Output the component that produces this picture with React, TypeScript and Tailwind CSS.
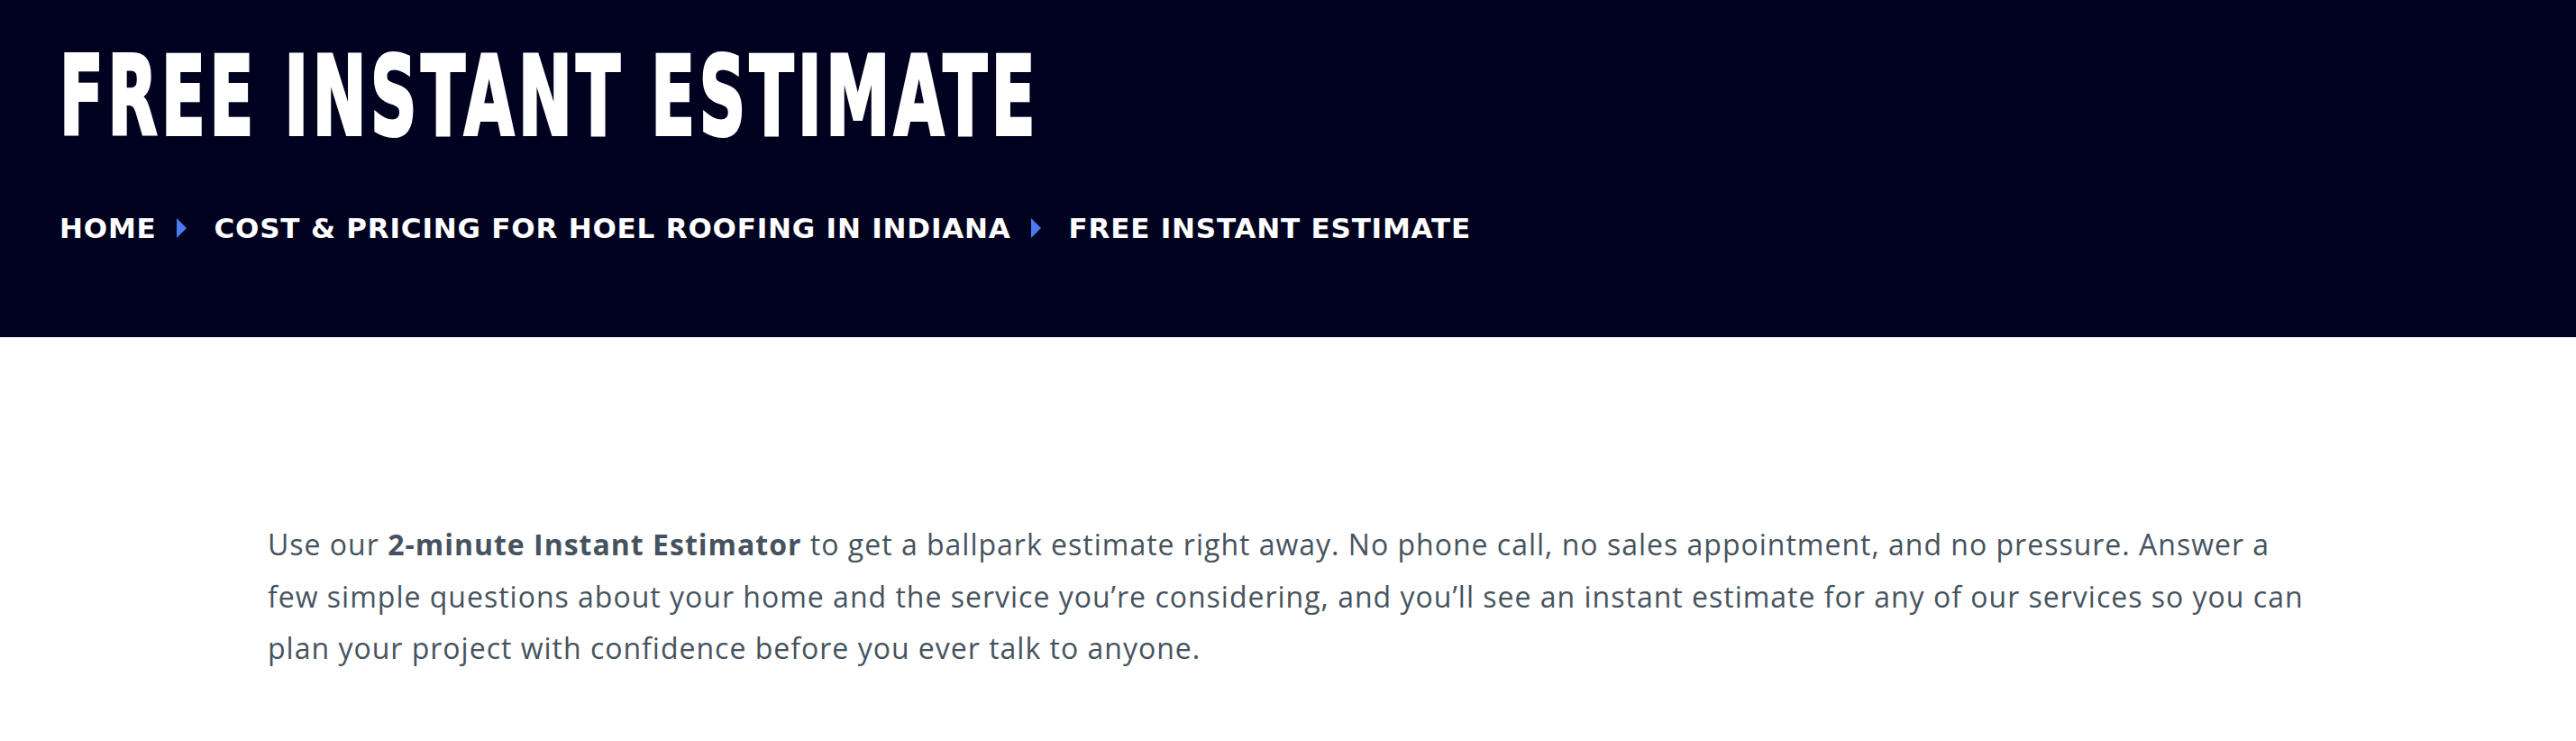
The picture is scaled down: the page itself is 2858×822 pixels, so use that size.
import React from 'react';

const Arrow: React.FC = () => (
  <svg width="11" height="22" viewBox="0 0 11 22" className="shrink-0">
    <path d="M0 0 L11 11 L0 22 Z" fill="#4a7bf0" />
  </svg>
);

const App: React.FC = () => {
  const crumbs = ['Home', 'Cost & Pricing for Hoel Roofing in Indiana', 'Free Instant Estimate'];

  return (
    <div className="min-h-screen bg-white">
      <header className="bg-[#01021f] h-[374px] px-[66px] pt-[41px]">
        <h1 className="inline-block origin-left scale-x-[0.585] whitespace-nowrap text-white uppercase font-bold text-[122px] leading-[132px] tracking-[8px] [-webkit-text-stroke:4px_white] [font-family:'DejaVu_Sans',sans-serif]">
          Free Instant Estimate
        </h1>
        <nav className="mt-[57px] flex items-center text-white uppercase font-bold text-[31px] tracking-[0.8px] [font-family:'DejaVu_Sans',sans-serif]">
          {crumbs.map((c, i) => (
            <React.Fragment key={c}>
              {i > 0 && (
                <span className="ml-[22px] mr-[31px] flex items-center">
                  <Arrow />
                </span>
              )}
              <span>{c}</span>
            </React.Fragment>
          ))}
        </nav>
      </header>

      <section className="pt-[201px] pb-[80px]">
        <p className="mx-auto w-[2264px] text-[32px] leading-[1.8] tracking-[1px] text-[#46535e] [font-family:'Open_Sans',sans-serif]">
          Use our <strong className="font-bold">2-minute Instant Estimator</strong> to get a ballpark estimate right away. No phone call, no sales appointment, and no pressure. Answer a few simple questions about your home and the service you’re considering, and you’ll see an instant estimate for any of our services so you can plan your project with confidence before you ever talk to anyone.
        </p>
      </section>
    </div>
  );
};

export default App;
